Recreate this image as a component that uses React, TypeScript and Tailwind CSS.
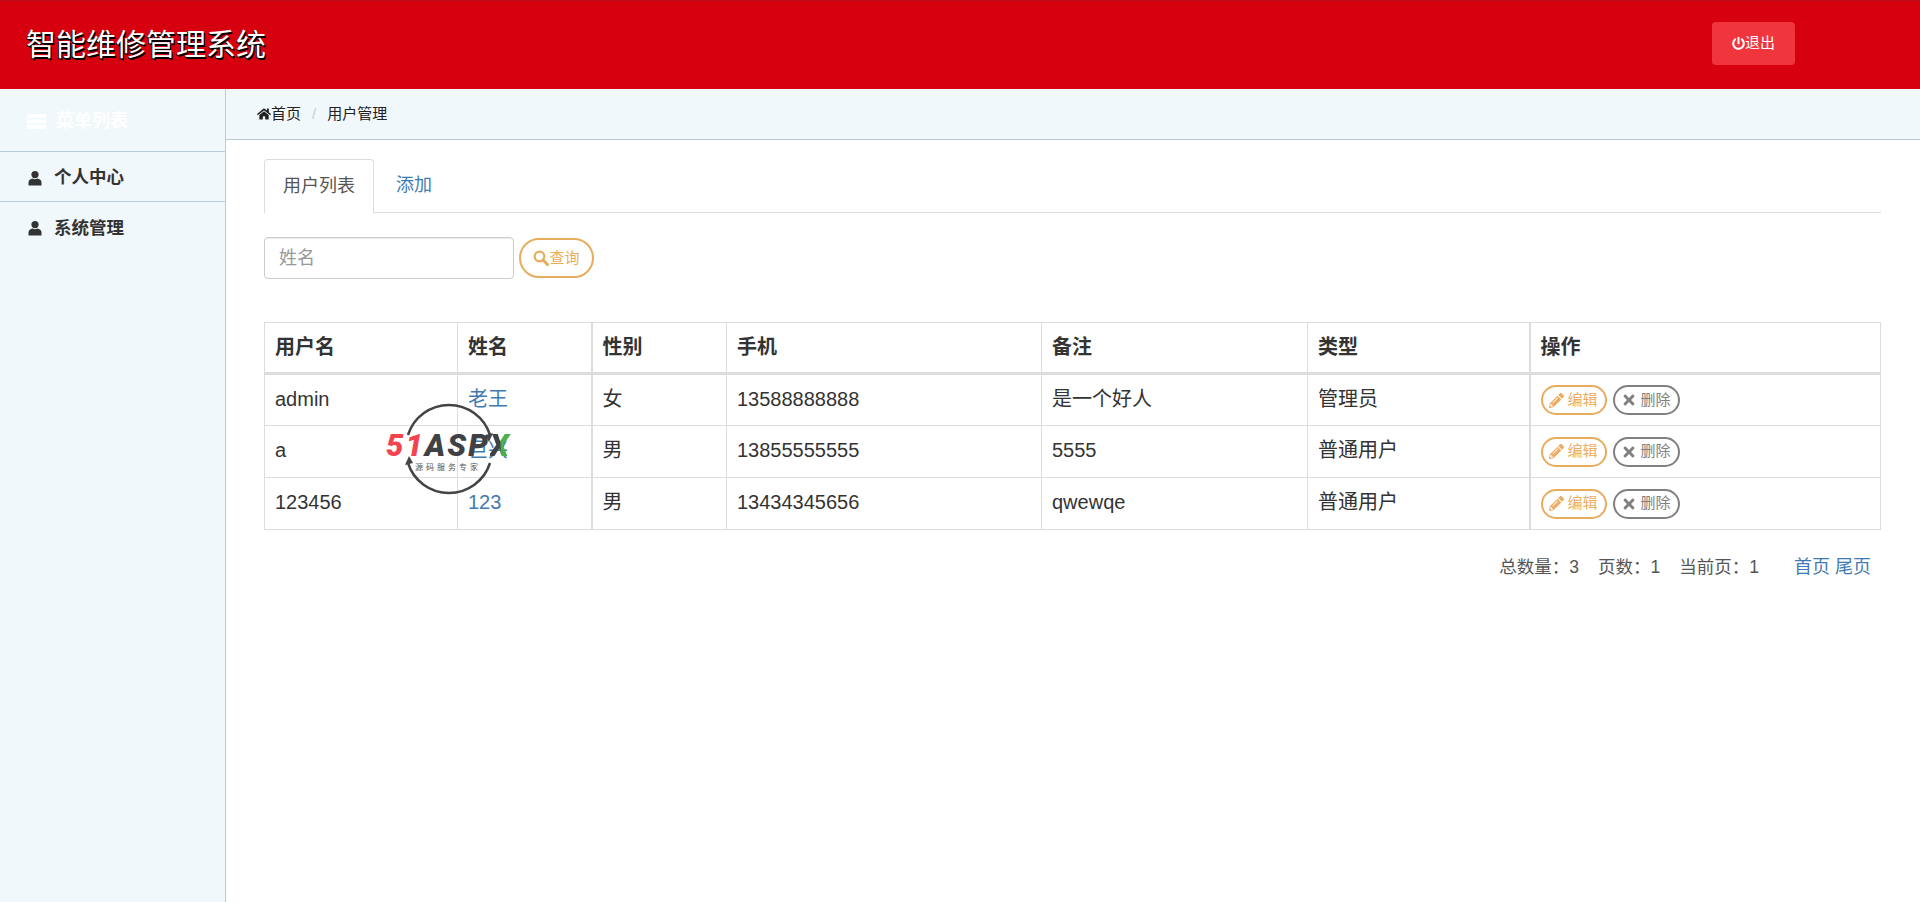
import { FaHome, FaPowerOff, FaPencilAlt, FaTimes } from 'react-icons/fa';

const users = [
  { username: 'admin', name: '老王', gender: '女', phone: '13588888888', note: '是一个好人', type: '管理员' },
  { username: 'a', name: '巨兴', gender: '男', phone: '13855555555', note: '5555', type: '普通用户' },
  { username: '123456', name: '123', gender: '男', phone: '13434345656', note: 'qwewqe', type: '普通用户' },
];

const cell = 'border border-[#dddddd] px-[10px] text-left align-middle';
const head = `${cell} pb-[1px]`;
const body = `${cell} pb-[3px]`;
const thick = 'border-r-2';

function UserIcon() {
  return (
    <svg width="16" height="16" viewBox="0 0 16 16" fill="currentColor">
      <circle cx="8" cy="4.6" r="3.6" />
      <path d="M1.5 15.5 V12.5 C1.5 10 3.5 9.2 5.6 8.6 C7 9.6 9 9.6 10.4 8.6 C12.5 9.2 14.5 10 14.5 12.5 V15.5 Z" />
    </svg>
  );
}

function ListIcon() {
  return (
    <svg width="19" height="15" viewBox="0 0 19 15" fill="currentColor">
      <rect x="0" y="0" width="19" height="4" />
      <rect x="0" y="5.5" width="19" height="4" />
      <rect x="0" y="11" width="19" height="4" />
    </svg>
  );
}

function SearchIcon() {
  return (
    <svg width="16" height="16" viewBox="0 0 16 16" fill="none" stroke="currentColor">
      <circle cx="6.5" cy="6.5" r="4.8" strokeWidth="2.2" />
      <path d="M10 10 L14.5 14.5" strokeWidth="3" strokeLinecap="round" />
    </svg>
  );
}

function Watermark() {
  return (
    <div className="absolute left-[386px] top-[403px] h-[92px] w-[128px]">
      <svg className="absolute left-[17px] top-0" width="92" height="92" viewBox="0 0 92 92" fill="none">
        <path d="M5 32 A43 43 0 0 1 87 32" stroke="#444" strokeWidth="2.5" />
        <path d="M5 60 A43 43 0 0 0 87 60" stroke="#444" strokeWidth="2.5" />
        <path d="M82 32 L90 30 L86 39 Z" fill="#444" />
        <path d="M10 60 L2 62 L6 53 Z" fill="#444" />
      </svg>
      <div className="absolute left-0 top-[27px] flex text-[31px] leading-[32px] font-black italic tracking-[2px] font-['Roboto',sans-serif]">
        <span className="text-[#f2444e]">51</span>
        <span className="text-[#3f4145]">ASP</span>
        <span className="bg-[linear-gradient(90deg,#3f4145_45%,#4caf50_55%)] bg-clip-text text-transparent">X</span>
      </div>
      <div className="absolute left-[29px] top-[59px] whitespace-nowrap text-[8px] leading-[12px] tracking-[3px] text-[#555]">
        源码服务专家
      </div>
    </div>
  );
}

export default function App() {
  return (
    <div className="relative flex h-[902px] flex-col overflow-hidden bg-white font-['Liberation_Sans','Noto_Sans_CJK_SC',sans-serif] text-[#333]">
      <header className="flex h-[89px] shrink-0 items-center justify-between border-t border-[#b5101c] bg-[#d7000f] pl-[26px] pr-[125px]">
        <h1 className="text-[30px] leading-none text-white [text-shadow:-1px_1px_0_#000,1px_2px_0_#000]">智能维修管理系统</h1>
        <button className="-mt-[3px] flex h-[43px] w-[83px] items-center justify-center rounded-[4px] bg-[#f0353d] text-[15px] text-white">
          <FaPowerOff className="h-[13px] w-[13px]" />
          退出
        </button>
      </header>

      <div className="flex min-h-0 flex-1">
        <aside className="w-[226px] shrink-0 border-r border-[#b8cdd6] bg-[#f1f8fc]">
          <div className="flex h-[63px] items-center gap-[10px] border-b border-[#b8cdd6] pl-[27px] pt-[2px] text-[18px] font-bold text-white">
            <ListIcon />
            菜单列表
          </div>
          <div className="flex h-[50px] items-center gap-[11px] border-b border-[#b8cdd6] pl-[27px] pt-[2px] text-[17.5px] font-bold">
            <UserIcon />
            个人中心
          </div>
          <div className="flex h-[50px] items-center gap-[11px] pl-[27px] pt-[2px] text-[17.5px] font-bold">
            <UserIcon />
            系统管理
          </div>
        </aside>

        <main className="min-w-0 flex-1">
          <nav className="flex h-[51px] items-center border-b border-[#b8cdd6] bg-[#f1f8fc] pl-[31px] text-[15px] text-[#222]">
            <FaHome className="h-[14px] w-[14px]" />
            <span>首页</span>
            <span className="mx-[11px] text-[#ccc]">/</span>
            <span>用户管理</span>
          </nav>

          <div className="pl-[38px] pr-[39px] pt-[19px]">
            <div className="flex h-[54px] border-b border-[#dddddd] text-[18px]">
              <div className="flex h-[54px] w-[110px] items-center justify-center rounded-t-[4px] border border-b-0 border-[#dddddd] bg-white text-[#555]">
                用户列表
              </div>
              <a className="flex items-center pl-[22px] text-[#3f7bb0]">添加</a>
            </div>

            <div className="mt-[24px] flex items-center gap-[5px]">
              <input
                placeholder="姓名"
                className="h-[42px] w-[250px] rounded-[4px] border border-[#cccccc] px-[14px] text-[18px] placeholder:text-[#999] shadow-[inset_0_1px_1px_rgba(0,0,0,0.075)]"
              />
              <button className="flex h-[40px] w-[75px] items-center justify-center rounded-full border-2 border-[#e8ad5c] text-[15px] text-[#e8ad5c]">
                <SearchIcon />
                查询
              </button>
            </div>

            <table className="mt-[43px] w-full table-fixed border-collapse text-[20px]">
              <colgroup>
                <col className="w-[193px]" />
                <col className="w-[134px]" />
                <col className="w-[135px]" />
                <col className="w-[315px]" />
                <col className="w-[266px]" />
                <col className="w-[222px]" />
                <col />
              </colgroup>
              <thead>
                <tr className="h-[51px] border-b-[3px] border-[#dddddd]">
                  <th className={head}>用户名</th>
                  <th className={`${head} ${thick}`}>姓名</th>
                  <th className={head}>性别</th>
                  <th className={head}>手机</th>
                  <th className={head}>备注</th>
                  <th className={`${head} ${thick}`}>类型</th>
                  <th className={head}>操作</th>
                </tr>
              </thead>
              <tbody>
                {users.map((u) => (
                  <tr key={u.username} className="h-[52px]">
                    <td className={body}>{u.username}</td>
                    <td className={`${body} ${thick}`}><a className="text-[#3f7bb0]">{u.name}</a></td>
                    <td className={body}>{u.gender}</td>
                    <td className={body}>{u.phone}</td>
                    <td className={body}>{u.note}</td>
                    <td className={`${body} ${thick}`}>{u.type}</td>
                    <td className={cell}>
                      <div className="flex gap-[6px]">
                        <button className="flex h-[30px] w-[66px] items-center justify-center gap-[3px] rounded-full border-2 border-[#e8ad5c] text-[15px] text-[#ecac63]">
                          <FaPencilAlt className="h-[15px] w-[15px]" />
                          编辑
                        </button>
                        <button className="flex h-[30px] w-[67px] items-center justify-center gap-[3px] rounded-full border-2 border-[#808080] text-[15px] text-[#808080]">
                          <FaTimes className="h-[16px] w-[16px]" />
                          删除
                        </button>
                      </div>
                    </td>
                  </tr>
                ))}
              </tbody>
            </table>

            <div className="mt-[24px] flex items-baseline justify-end pr-[10px] text-[17.5px] leading-[26px] text-[#555]">
              <span>总数量：3</span>
              <span className="ml-[19px]">页数：1</span>
              <span className="ml-[19px]">当前页：1</span>
              <a className="ml-[35px] text-[18px] text-[#3f7bb0]">首页 尾页</a>
            </div>
          </div>
        </main>
      </div>

      <Watermark />
    </div>
  );
}
